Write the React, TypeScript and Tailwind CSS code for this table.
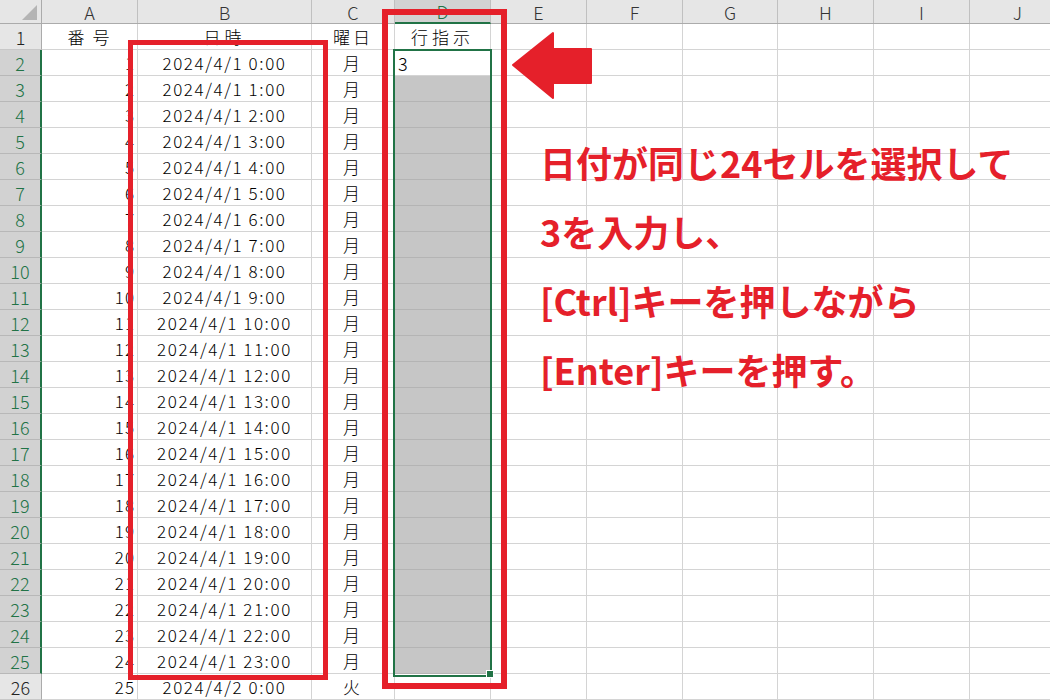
import React from "react";

// column widths in px, taken from the sheet grid
const columns = [
  { key: "A", w: "w-[96px]" },
  { key: "B", w: "w-[174px]" },
  { key: "C", w: "w-[83px]" },
  { key: "D", w: "w-[96px]" },
  { key: "E", w: "w-[96px]" },
  { key: "F", w: "w-[96px]" },
  { key: "G", w: "w-[95px]" },
  { key: "H", w: "w-[96px]" },
  { key: "I", w: "w-[96px]" },
  { key: "J", w: "w-[96px]" },
];

type Row = { n: number; a: string; b: string; c: string; d: string };

const rows: Row[] = [
  { n: 1, a: "番号", b: "日時", c: "曜日", d: "行指示" },
  ...Array.from({ length: 24 }, (_, i) => ({
    n: i + 2,
    a: String(i + 1),
    b: `2024/4/1 ${i}:00`,
    c: "月",
    d: i === 0 ? "3" : "",
  })),
  { n: 26, a: "25", b: "2024/4/2 0:00", c: "火", d: "" },
];

function ColumnHeader() {
  return (
    <div className="flex h-[24px] bg-[#e6e6e6] border-b border-[#ababab] font-light leading-none">
      <div className="relative w-[42px] shrink-0 border-r border-[#ababab]">
        <div className="absolute right-[4px] bottom-[3px] w-0 h-0 border-l-[15px] border-l-transparent border-b-[15px] border-b-[#b4b4b4]" />
      </div>
      {columns.map((col) =>
        col.key === "D" ? (
          <div
            key={col.key}
            className={`${col.w} shrink-0 -mb-px flex items-center justify-center border-r border-[#c0c0c0] border-b-2 border-b-[#217346] bg-[#d2d2d2] text-[#217346] text-[18px]`}
          >
            {col.key}
          </div>
        ) : (
          <div
            key={col.key}
            className={`${col.w} shrink-0 flex items-center justify-center border-r border-[#c0c0c0] text-[#333] text-[18px]`}
          >
            {col.key}
          </div>
        )
      )}
    </div>
  );
}

function SheetRow({ row }: { row: Row }) {
  const selected = row.n >= 2 && row.n <= 25;
  const shaded = row.n >= 3 && row.n <= 25;
  return (
    <div className="flex h-[26px] text-[17px] leading-none font-light text-black">
      {selected ? (
        <div className="w-[42px] shrink-0 flex items-center justify-center bg-[#d2d2d2] text-[#217346] text-[18px] border-b border-[#b8b8b8] border-r-2 border-r-[#217346]">
          {row.n}
        </div>
      ) : (
        <div className="w-[42px] shrink-0 flex items-center justify-center bg-[#e6e6e6] text-[#222] text-[18px] border-b border-[#c8c8c8] border-r border-r-[#ababab]">
          {row.n}
        </div>
      )}
      <div className="w-[96px] shrink-0 flex items-center justify-end pr-[2px] border-r border-b border-[#d4d4d4] tracking-[1px]">
        {row.n === 1 ? <span className="w-full text-center tracking-[8px] pl-[8px]">{row.a}</span> : row.a}
      </div>
      <div className="w-[174px] shrink-0 flex items-center justify-center border-r border-b border-[#d4d4d4] tracking-[1.6px]">
        {row.n === 1 ? <span className="tracking-[4px]">{row.b}</span> : row.b}
      </div>
      <div className="w-[83px] shrink-0 flex items-center justify-center border-r border-b border-[#d4d4d4] tracking-[3px]">
        {row.c}
      </div>
      <div
        className={`w-[96px] shrink-0 flex items-center border-r border-b ${
          shaded ? "bg-[#c6c6c6] border-[#b4b4b4]" : "border-[#d4d4d4]"
        } ${row.n === 1 ? "justify-center tracking-[4px]" : "justify-start pl-[3px] text-[18px]"}`}
      >
        {row.d}
      </div>
      {columns.slice(4).map((col) => (
        <div key={col.key} className={`${col.w} shrink-0 border-r border-b border-[#d4d4d4]`} />
      ))}
    </div>
  );
}

export default function App() {
  return (
    <div className="relative w-[1050px] h-[700px] overflow-hidden bg-white font-['Noto_Sans_CJK_JP',sans-serif]">
      <ColumnHeader />
      {rows.map((row) => (
        <SheetRow key={row.n} row={row} />
      ))}

      {/* selection D2:D25 */}
      <div className="absolute left-[393px] top-[49px] w-[99px] h-[628px] border-2 border-[#217346]" />
      <div className="absolute left-[486px] top-[670px] w-[8px] h-[8px] bg-[#217346] border border-white" />

      {/* red highlight boxes */}
      <div className="absolute left-[128px] top-[40px] w-[200px] h-[640px] border-[5px] border-[#e5202a]" />
      <div className="absolute left-[382px] top-[9px] w-[125px] h-[680px] border-[6px] border-[#e5202a]" />

      {/* arrow */}
      <svg className="absolute left-[510px] top-[30px]" width="85" height="72" viewBox="510 30 85 72">
        <polygon
          points="513,65 553,33 553,49 591,49 591,83 553,83 553,98"
          fill="#e5202a"
          stroke="#e5202a"
          strokeWidth="2"
          strokeLinejoin="round"
        />
      </svg>

      {/* note */}
      <div className="absolute left-[540px] top-[128px] text-[36px] leading-[69px] font-bold text-[#e5202a]">
        <div>日付が同じ24セルを選択して</div>
        <div>3を入力し、</div>
        <div>[Ctrl]キーを押しながら</div>
        <div>[Enter]キーを押す。</div>
      </div>
    </div>
  );
}
